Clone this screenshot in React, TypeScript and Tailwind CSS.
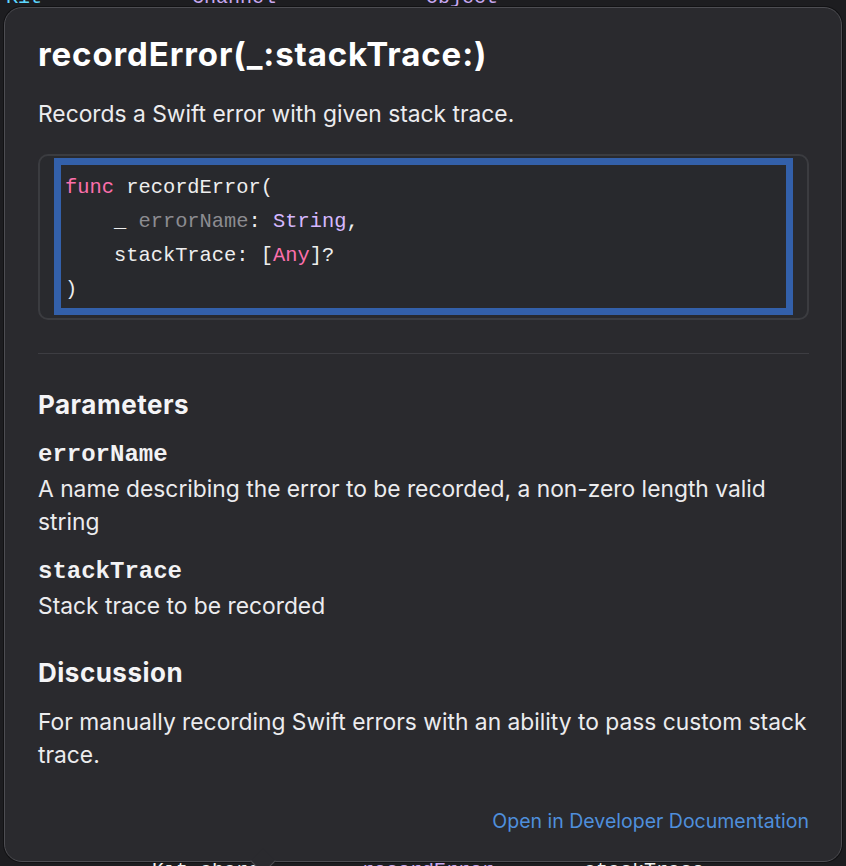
import React from "react";

const sans = "font-['Inter','Noto_Sans',sans-serif]";
const mono = "font-['Liberation_Mono','DejaVu_Sans_Mono',monospace]";

const Param = ({ name, children }: { name: string; children: React.ReactNode }) => (
  <div className="mt-[20px]">
    <div className={`${mono} text-[24px] font-bold leading-[30px] text-[#f2f2f4]`}>{name}</div>
    <p className="mt-[2px] text-[22.8px] leading-[33px] text-[#ececee]">{children}</p>
  </div>
);

export default function App() {
  return (
    <div className={`${sans} w-[846px] h-[866px] bg-[#1d1d20] overflow-hidden flex flex-col`}>
      {/* editor text peeking above the popover */}
      <div className={`${mono} h-[7px] overflow-hidden text-[20px] leading-[20px]`}>
        <div className="-mt-[12px] pl-[6px] flex gap-[150px] whitespace-pre">
          <span className="text-[#5dd8ff]">Kit</span>
          <span className="text-[#c8a8f0]">Channel</span>
          <span className="text-[#c8a8f0]">Object</span>
        </div>
      </div>

      <div className="relative mx-[4px] flex-1 flex flex-col rounded-[18px] border border-[#4d4d52] bg-[#2a2a2e] shadow-[0_0_0_1px_#121214] pl-[33px] pr-[32px]">
        <h1 className="pt-[28px] text-[33px] font-bold leading-[36px] tracking-[0.9px] text-white">
          recordError(_:stackTrace:)
        </h1>
        <p className="mt-[25px] text-[22.8px] leading-[33px] text-[#ececee]">
          Records a Swift error with given stack trace.
        </p>

        <div className="mt-[24px] h-[166px] rounded-[10px] border-2 border-[#3b3c40] bg-[#292a2e] px-[14px] pt-[2px]">
          <div className={`${mono} h-[157px] border-[7px] border-[#3360aa] bg-[#28292d] px-[4px] pt-[6px] text-[20.4px] leading-[34px] text-[#eeeeee] whitespace-pre`}>
            <div>
              <span className="text-[#fc6fac]">func</span> recordError(
            </div>
            <div>
              {"    _ "}
              <span className="text-[#8c8c91]">errorName</span>: <span className="text-[#d6b8ff]">String</span>,
            </div>
            <div>
              {"    stackTrace: ["}
              <span className="text-[#fc6fac]">Any</span>]?
            </div>
            <div>)</div>
          </div>
        </div>

        <div className="mt-[33px] h-[1px] bg-[#3d3d42]" />

        <h2 className="mt-[36px] text-[26px] font-bold leading-[30px] tracking-[0.5px] text-[#f4f4f6]">Parameters</h2>
        <Param name="errorName">A name describing the error to be recorded, a non-zero length valid string</Param>
        <div className="-mt-[1px]">
          <Param name="stackTrace">Stack trace to be recorded</Param>
        </div>

        <h2 className="mt-[36px] text-[26px] font-bold leading-[30px] tracking-[0.5px] text-[#f4f4f6]">Discussion</h2>
        <p className="mt-[17px] text-[22.8px] leading-[33px] text-[#ececee]">
          For manually recording Swift errors with an ability to pass custom stack trace.
        </p>

        <div className="mt-[36px] flex justify-end">
          <a className="text-[19.5px] leading-[28px] text-[#4f8fdc]">Open in Developer Documentation</a>
        </div>

        {/* popover tip */}
        <div className="absolute left-[249px] -bottom-[9px] h-[18px] w-[18px] rotate-45 border-r border-b border-[#4d4d52] bg-[#2a2a2e]" />
      </div>

      {/* editor text peeking below the popover */}
      <div className={`${mono} h-[4px] overflow-hidden text-[20px] leading-[20px]`}>
        <div className="pl-[152px] flex gap-[90px] whitespace-pre -mt-[1px]">
          <span className="text-[#eeeeee]">Kit.shared</span>
          <span className="text-[#c8a8f0]">recordError</span>
          <span className="text-[#eeeeee]">stackTrace</span>
        </div>
      </div>
    </div>
  );
}
